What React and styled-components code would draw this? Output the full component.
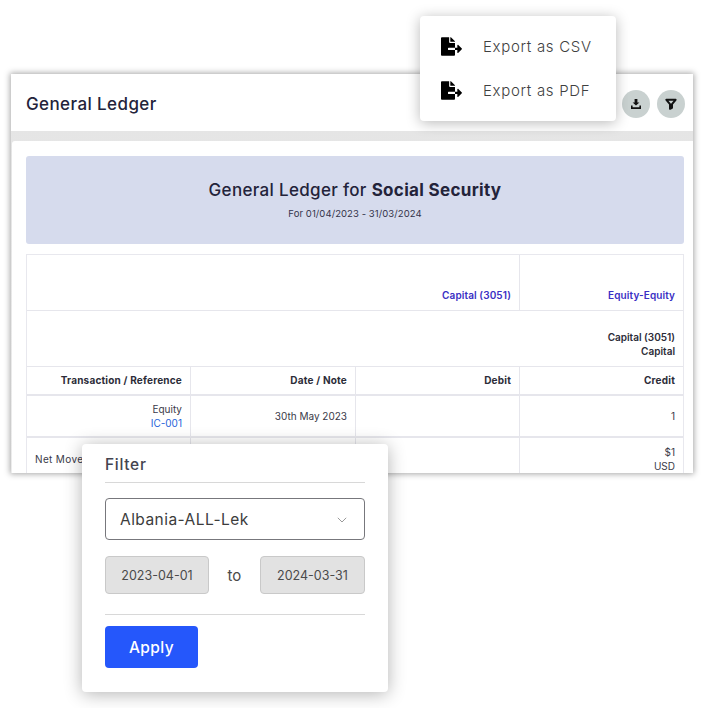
import React from "react";
import styled, { createGlobalStyle } from "styled-components";
import { FaFileExport } from "react-icons/fa";

const FONT = `"Inter", "Liberation Sans", sans-serif`;

function DownloadIcon() {
  return (
    <svg width="12" height="12" viewBox="0 0 12 12" fill="#111">
      <path d="M4.6 1h2.8v3.4h2L6 7.6 2.6 4.4h2z" />
      <path d="M1 7.6h1.6v1.6h6.8V7.6H11V11H1z" />
    </svg>
  );
}

function FilterIcon() {
  return (
    <svg width="12" height="12" viewBox="0 0 12 12" fill="none" stroke="#111" strokeWidth="2">
      <path d="M1.4 1.8h9.2L7 6.2v3.6l-2 1V6.2z" strokeLinejoin="round" />
    </svg>
  );
}

function Chevron() {
  return (
    <svg width="10" height="6" viewBox="0 0 10 6" fill="none" stroke="#9a9a9a" strokeWidth="1">
      <path d="M0.8 0.8 5 5l4.2-4.2" />
    </svg>
  );
}

export default function App() {
  return (
    <Page>
      <GlobalStyle />
      <Window>
        <Header>
          <Title>General Ledger</Title>
          <HeaderActions>
            <RoundButton><DownloadIcon /></RoundButton>
            <RoundButton><FilterIcon /></RoundButton>
          </HeaderActions>
        </Header>
        <Body>
          <Banner>
            <BannerTitle>General Ledger for <strong>Social Security</strong></BannerTitle>
            <BannerSub>For 01/04/2023 - 31/03/2024</BannerSub>
          </Banner>
          <Table>
            <TopRow>
              <AccountCell $span={3}>Capital (3051)</AccountCell>
              <AccountCell>Equity-Equity</AccountCell>
            </TopRow>
            <NameRow>
              <NameCell>Capital (3051)<br />Capital</NameCell>
            </NameRow>
            <HeadRow>
              <HeadCell>Transaction / Reference</HeadCell>
              <HeadCell>Date / Note</HeadCell>
              <HeadCell>Debit</HeadCell>
              <HeadCell>Credit</HeadCell>
            </HeadRow>
            <DataRow>
              <DataCell>Equity<RefLink>IC-001</RefLink></DataCell>
              <DataCell>30th May 2023</DataCell>
              <DataCell />
              <DataCell>1</DataCell>
            </DataRow>
            <TotalRow>
              <TotalLabel>Net Movement</TotalLabel>
              <DataCell />
              <DataCell />
              <AmountCell>$1<br />USD</AmountCell>
            </TotalRow>
          </Table>
        </Body>
      </Window>

      <ExportMenu>
        <ExportItem><FaFileExport size={21} color="#000" />Export as CSV</ExportItem>
        <ExportItem><FaFileExport size={21} color="#000" />Export as PDF</ExportItem>
      </ExportMenu>

      <FilterPanel>
        <FilterTitle>Filter</FilterTitle>
        <Select>Albania-ALL-Lek<Chevron /></Select>
        <DateRow>
          <DateBox>2023-04-01</DateBox>
          <DateTo>to</DateTo>
          <DateBox>2024-03-31</DateBox>
        </DateRow>
        <FilterFooter>
          <ApplyButton>Apply</ApplyButton>
        </FilterFooter>
      </FilterPanel>
    </Page>
  );
}

const GlobalStyle = createGlobalStyle`
  * {
    box-sizing: border-box;
  }

  html, body {
    margin: 0;
    background: #fff;
    font-family: ${FONT};
    color: #23233a;
  }
`;

const Page = styled.div`
  position: relative;
  width: 702px;
  height: 708px;
  padding: 74px 0 0 11px;
  overflow: hidden;
`;

const Window = styled.div`
  width: 682px;
  height: 399px;
  display: flex;
  flex-direction: column;
  overflow: hidden;
  background: linear-gradient(#e4e4e4, #ececec);
  box-shadow: 0 0 6px 1px rgba(0, 0, 0, 0.35);
`;

const Header = styled.header`
  height: 57px;
  flex: none;
  display: flex;
  align-items: center;
  justify-content: space-between;
  padding: 2px 8px 0 15px;
  background: #fff;
`;

const Title = styled.h1`
  margin: 0;
  font-size: 17px;
  font-weight: 500;
  letter-spacing: 0.4px;
  color: #23233a;
`;

const HeaderActions = styled.div`
  display: flex;
  gap: 7px;
`;

const RoundButton = styled.button`
  width: 28px;
  height: 28px;
  padding: 0;
  display: flex;
  align-items: center;
  justify-content: center;
  border: none;
  border-radius: 50%;
  background: #c9d1d0;
`;

const Body = styled.main`
  flex: 1;
  min-height: 0;
  margin: 10px 0 0 1px;
  padding: 15px 9px 0 14px;
  overflow: hidden;
  background: #fff;
  border-radius: 3px 0 0 0;
`;

const Banner = styled.section`
  height: 88px;
  display: flex;
  flex-direction: column;
  align-items: center;
  justify-content: center;
  gap: 6px;
  padding-bottom: 2px;
  background: #d6dbed;
  border-radius: 3px;
`;

const BannerTitle = styled.h2`
  margin: 0;
  font-size: 17px;
  font-weight: 500;
  line-height: 24px;
  letter-spacing: 0.32px;
  color: #23233a;

  strong {
    font-weight: 700;
  }
`;

const BannerSub = styled.div`
  font-size: 9.5px;
  line-height: 12px;
  letter-spacing: 0.08px;
  color: #33334a;
`;

const Table = styled.div`
  margin-top: 10px;
  border: 1px solid #e8e8ee;
  border-bottom: none;
  font-size: 10px;
  color: #3a3a48;
`;

const Row = styled.div`
  display: grid;
  grid-template-columns: 164px 165px 164px 1fr;
  border-bottom: 1px solid #e6e6ec;
`;

const Cell = styled.div`
  padding: 0 8px;
  display: flex;
  flex-direction: column;
  align-items: flex-end;
  justify-content: center;
  text-align: right;
  border-right: 1px solid #e6e6ec;

  &:last-child {
    border-right: none;
  }
`;

const TopRow = styled(Row)`
  height: 56px;
`;

const AccountCell = styled(Cell)`
  grid-column: span ${(props) => props.$span || 1};
  justify-content: flex-end;
  padding-bottom: 9px;
  font-weight: 600;
  letter-spacing: 0.1px;
  color: #3a2fc4;
`;

const NameRow = styled(Row)`
  height: 56px;
`;

const NameCell = styled(Cell)`
  grid-column: 1 / -1;
  display: block;
  padding-top: 19px;
  font-weight: 600;
  line-height: 14px;
  color: #2c2c38;
`;

const HeadRow = styled(Row)`
  height: 29px;
  border-bottom-width: 2px;
`;

const HeadCell = styled(Cell)`
  padding-bottom: 1px;
  font-weight: 700;
  letter-spacing: 0.2px;
  color: #2c2c38;
`;

const DataRow = styled(Row)`
  height: 42px;
  border-bottom-width: 2px;
`;

const DataCell = styled(Cell)`
  line-height: 14px;
  color: #3a3a48;
`;

const AmountCell = styled(DataCell)`
  justify-content: flex-start;
  padding-top: 7px;
`;

const RefLink = styled.div`
  color: #2563d9;
`;

const TotalRow = styled(Row)`
  height: 43px;
`;

const TotalLabel = styled(Cell)`
  align-items: flex-start;
  padding-left: 8px;
  letter-spacing: 0.35px;
`;

const ExportMenu = styled.div`
  position: absolute;
  left: 420px;
  top: 16px;
  width: 196px;
  height: 105px;
  padding-top: 8px;
  background: #fff;
  border-radius: 4px;
  box-shadow: 0 2px 14px rgba(0, 0, 0, 0.28);
`;

const ExportItem = styled.div`
  height: 44px;
  display: flex;
  align-items: center;
  gap: 21px;
  padding-left: 21px;
  font-size: 15px;
  font-weight: 300;
  letter-spacing: 0.68px;
  color: #3f3f3f;
`;

const FilterPanel = styled.div`
  position: absolute;
  left: 82px;
  top: 444px;
  width: 306px;
  height: 248px;
  padding: 0 23px;
  background: #fff;
  border-radius: 4px;
  box-shadow: 0 2px 18px rgba(0, 0, 0, 0.3);
`;

const FilterTitle = styled.div`
  height: 39px;
  display: flex;
  align-items: center;
  padding-top: 3px;
  border-bottom: 1px solid #d8d8d8;
  font-size: 15.5px;
  font-weight: 500;
  letter-spacing: 0.7px;
  color: #44444f;
`;

const Select = styled.div`
  height: 42px;
  margin-top: 15px;
  display: flex;
  align-items: center;
  justify-content: space-between;
  padding: 1px 17px 0 14px;
  border: 1px solid #77777c;
  border-radius: 4px;
  font-size: 15.5px;
  letter-spacing: 0.45px;
  color: #3c3c3c;
`;

const DateRow = styled.div`
  margin-top: 16px;
  display: flex;
  align-items: center;
  justify-content: space-between;
`;

const DateBox = styled.div`
  width: 104px;
  height: 38px;
  display: flex;
  align-items: center;
  justify-content: center;
  background: #e2e2e2;
  border: 1px solid #c9c9c9;
  border-radius: 4px;
  font-size: 12.5px;
  color: #4a4a4a;

  &:last-child {
    width: 105px;
  }
`;

const DateTo = styled.span`
  font-size: 15px;
  color: #4a4a4a;
`;

const FilterFooter = styled.div`
  margin-top: 20px;
  padding-top: 11px;
  border-top: 1px solid #d8d8d8;
`;

const ApplyButton = styled.button`
  width: 93px;
  height: 42px;
  border: none;
  border-radius: 4px;
  background: #2557fb;
  color: #fff;
  font-family: ${FONT};
  font-size: 15.5px;
  font-weight: 500;
  letter-spacing: 0.4px;
`;
